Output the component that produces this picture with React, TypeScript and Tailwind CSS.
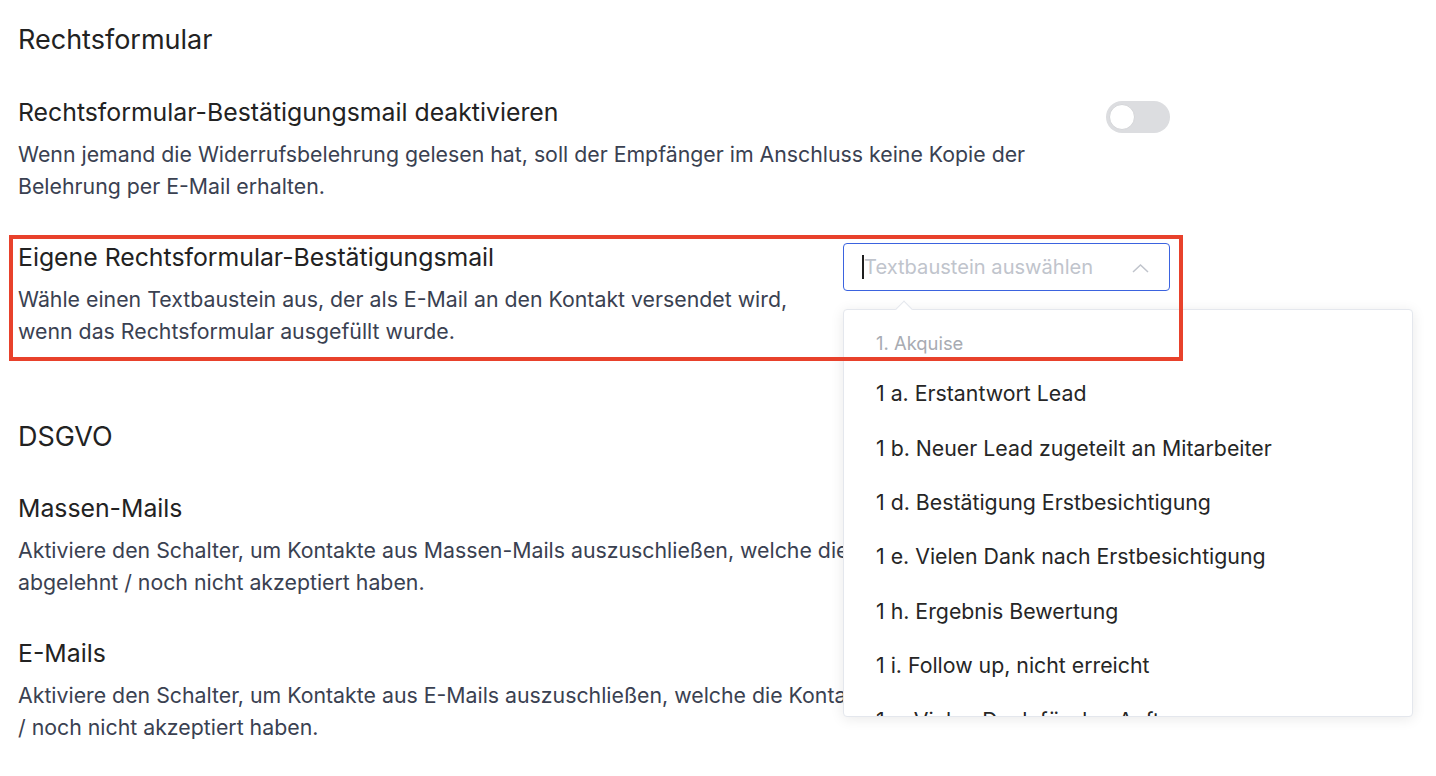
import React from "react";

const groups = [
  {
    label: "1. Akquise",
    items: [
      "1 a. Erstantwort Lead",
      "1 b. Neuer Lead zugeteilt an Mitarbeiter",
      "1 d. Bestätigung Erstbesichtigung",
      "1 e. Vielen Dank nach Erstbesichtigung",
      "1 h. Ergebnis Bewertung",
      "1 i. Follow up, nicht erreicht",
      "1 v. Vielen Dank für den Auftrag",
    ],
  },
];

function Toggle() {
  return (
    <div className="mt-[5px] flex h-8 w-16 shrink-0 items-center rounded-full bg-[#dcdde0] p-[3px]">
      <span className="h-[26px] w-[26px] rounded-full border border-[#d4d5d8] bg-white" />
    </div>
  );
}

function SettingText({ title, children }: { title: string; children: React.ReactNode }) {
  return (
    <div className="flex-1">
      <div className="text-[24.8px] leading-8 text-[#222]">{title}</div>
      <p className="mt-2.5 text-[21.3px] leading-8 text-[#3a4151]">{children}</p>
    </div>
  );
}

function TemplateSelect() {
  return (
    <div className="relative mt-[2px] w-[327px] shrink-0">
      <div className="flex h-12 items-center rounded-[4px] border border-[#3b63df] bg-white pl-[18px] pr-5">
        <span className="h-6 w-[2px] bg-[#1f1f1f]" />
        <span className="flex-1 text-[20.1px] text-[#c0c4cc]">Textbaustein auswählen</span>
        <svg width="17" height="9" viewBox="0 0 17 9" fill="none" className="mt-0.5">
          <polyline points="1,8 8.5,1 16,8" stroke="#c0c4cc" strokeWidth="1.5" />
        </svg>
      </div>

      <div className="absolute left-0 top-[66px] z-10 h-[408px] w-[570px] rounded-[4px] border border-[#e4e7ed] bg-white shadow-[0_2px_14px_rgba(0,0,0,0.09)]">
        <span className="absolute -top-[7px] left-[54px] h-3 w-3 rotate-45 border-l border-t border-[#e4e7ed] bg-white" />
        <div className="h-full overflow-hidden pt-[11px]">
          {groups.map((g) => (
            <div key={g.label}>
              <div className="flex h-[46px] items-center px-8 text-[18.4px] text-[#a8abb2]">{g.label}</div>
              {g.items.map((item) => (
                <div key={item} className="flex h-[54.4px] items-center px-8 text-[21.3px] text-[#262626]">
                  {item}
                </div>
              ))}
            </div>
          ))}
        </div>
      </div>
    </div>
  );
}

export default function App() {
  return (
    <div className="min-h-screen bg-white font-['Inter',sans-serif]">
      <div className="ml-[18px] w-[1152px] pt-6">
        <h2 className="text-[27px] leading-8 text-[#222]">Rechtsformular</h2>

        <div className="mt-10 flex items-start gap-10">
          <SettingText title="Rechtsformular-Bestätigungsmail deaktivieren">
            Wenn jemand die Widerrufsbelehrung gelesen hat, soll der Empfänger im Anschluss keine Kopie der
            Belehrung per E-Mail erhalten.
          </SettingText>
          <Toggle />
        </div>

        <div className="relative mt-[39px] flex items-start gap-10">
          <SettingText title="Eigene Rechtsformular-Bestätigungsmail">
            Wähle einen Textbaustein aus, der als E-Mail an den Kontakt versendet wird, wenn das Rechtsformular
            ausgefüllt wurde.
          </SettingText>
          <TemplateSelect />
          <div className="pointer-events-none absolute -bottom-[14px] -left-[9px] -right-[13px] -top-[6px] z-20 border-4 border-[#e8412b]" />
        </div>

        <h2 className="mt-[74px] text-[27px] leading-8 text-[#222]">DSGVO</h2>

        <div className="mt-[39px] flex items-start gap-10">
          <SettingText title="Massen-Mails">
            Aktiviere den Schalter, um Kontakte aus Massen-Mails auszuschließen, welche die DSGVO
            <br />
            abgelehnt / noch nicht akzeptiert haben.
          </SettingText>
          <Toggle />
        </div>

        <div className="mt-[39px] flex items-start gap-10">
          <SettingText title="E-Mails">
            Aktiviere den Schalter, um Kontakte aus E-Mails auszuschließen, welche die Kontaktdaten abgelehnt
            <br />/ noch nicht akzeptiert haben.
          </SettingText>
          <Toggle />
        </div>
      </div>
    </div>
  );
}
